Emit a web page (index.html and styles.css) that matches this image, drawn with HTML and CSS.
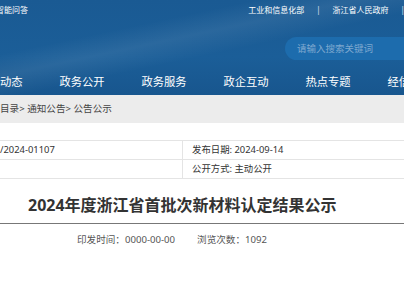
FILE: index.html
```html
<!DOCTYPE html>
<html lang="zh-CN">
<head>
  <meta charset="UTF-8" />
  <meta name="viewport" content="width=device-width, initial-scale=1.0" />
  <title>2024年度浙江省首批次新材料认定结果公示</title>
  <link rel="stylesheet" href="styles.css">
</head>
<body>
  <header class="masthead">
    <div class="topbar">
      <a class="top-left" href="#">智能问答</a>
      <div class="top-links">
        <a href="#">工业和信息化部</a>
        <span class="sep">|</span>
        <a href="#">浙江省人民政府</a>
        <span class="sep">|</span>
      </div>
    </div>
    <div class="search-row">
      <div class="search">请输入搜索关键词</div>
    </div>
    <nav class="mainnav">
      <a href="#">经信动态</a>
      <a href="#">政务公开</a>
      <a href="#">政务服务</a>
      <a href="#">政企互动</a>
      <a href="#">热点专题</a>
      <a href="#">经信数据</a>
    </nav>
  </header>

  <div class="crumbs">目录&gt; 通知公告&gt; 公告公示</div>

  <div class="info">
    <div class="info-row">
      <div class="cell left">/2024-01107</div>
      <div class="cell right">发布日期: 2024-09-14</div>
    </div>
    <div class="info-row">
      <div class="cell left"></div>
      <div class="cell right">公开方式: 主动公开</div>
    </div>
  </div>

  <h1 class="title">2024年度浙江省首批次新材料认定结果公示</h1>

  <div class="meta">
    <span>印发时间：0000-00-00</span>
    <span>浏览次数：1092</span>
  </div>
</body>
</html>
```

FILE: styles.css
```css
body {
  margin: 0;
  overflow: hidden;
  font-family: "Noto Sans", "Noto Sans CJK SC", sans-serif;
  color: #333;
  background: #fff;
}
a {
  color: inherit;
  text-decoration: none;
}
.masthead {
  height: 95px;
  color: #fff;
  background:
    linear-gradient(168deg, rgba(255,255,255,0) 30%, rgba(255,255,255,0.07) 42%, rgba(255,255,255,0) 55%),
    linear-gradient(180deg, #1a5a93 0%, #1b5e98 60%, #18568e 100%);
  overflow: hidden;
}
.topbar {
  height: 18px;
  display: flex;
  justify-content: space-between;
  align-items: center;
  font-size: 8px;
}
.top-left {
  margin-left: -4px;
}
.top-links {
  display: flex;
  align-items: center;
  gap: 12px;
  margin-right: -1px;
}
.sep {
  opacity: 0.8;
}
.search-row {
  height: 48px;
  display: flex;
  justify-content: flex-end;
  align-items: flex-start;
}
.search {
  margin-top: 19px;
  margin-right: -40px;
  width: 147px;
  height: 23px;
  line-height: 23px;
  padding-left: 12px;
  border-radius: 12px;
  background: #1d6cad;
  color: #7ea8cf;
  font-size: 9.5px;
}
.mainnav {
  height: 29px;
  display: flex;
  align-items: center;
  margin-left: -41px;
  font-size: 11.3px;
}
.mainnav a {
  flex: 0 0 82px;
  text-align: center;
}
.crumbs {
  height: 28px;
  line-height: 28px;
  background: #ececec;
  font-size: 9.6px;
  color: #444;
}
.info {
  margin-top: 17px;
  border-top: 1px solid #e4e4e4;
  font-size: 9.4px;
}
.info-row {
  display: flex;
  height: 18px;
  border-bottom: 1px solid #e4e4e4;
}
.cell {
  line-height: 18px;
}
.cell.left {
  width: 182px;
  border-right: 1px solid #e4e4e4;
}
.cell.right {
  padding-left: 9px;
}
.title {
  margin: 0;
  padding: 16px 0 8px 28px;
  font-size: 16px;
  line-height: 20px;
  font-weight: bold;
  color: #333;
  border-bottom: 1.5px solid #777;
}
.meta {
  margin-top: 10px;
  padding-left: 77px;
  display: flex;
  gap: 22px;
  font-size: 9.6px;
  line-height: 12px;
  color: #555;
}
```
